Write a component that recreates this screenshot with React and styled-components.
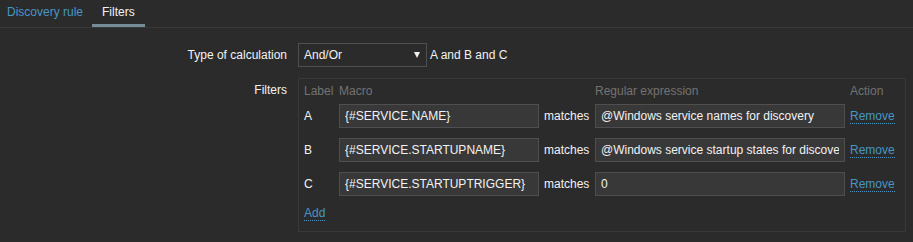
import React from "react";
import styled, { createGlobalStyle } from "styled-components";

const COLORS = {
  BG: "#2b2b2b",
  FIELD: "#383838",
  BORDER: "#4f4f4f",
  LINE: "#383838",
  TEXT: "#f2f2f2",
  MUTED: "#737373",
  LINK: "#4796c4",
  ACTIVE: "#768d99",
};

const GlobalStyle = createGlobalStyle`
  html, body {
    margin: 0;
    background: ${COLORS.BG};
    color: ${COLORS.TEXT};
    font-family: "Liberation Sans", Arial, sans-serif;
    font-size: 12px;
  }
  * { box-sizing: border-box; }
`;

const Page = styled.div`
  min-height: 242px;
  background: ${COLORS.BG};
`;

const TabList = styled.div`
  display: flex;
  height: 28px;
  border-bottom: 1px solid ${COLORS.LINE};
`;

const Tab = styled.div`
  padding: 0 10px;
  line-height: 24px;
  border-bottom: 3px solid ${({ active }) => (active ? COLORS.ACTIVE : "transparent")};
  color: ${({ active }) => (active ? COLORS.TEXT : COLORS.LINK)};
  &:first-child {
    padding-left: 7px;
    padding-right: 9px;
  }
`;

const Form = styled.div`
  display: grid;
  grid-template-columns: 287px auto;
  column-gap: 11px;
  row-gap: 11px;
  padding-top: 15px;
`;

const Label = styled.div`
  text-align: right;
  line-height: 24px;
`;

const Row = styled.div`
  display: flex;
  align-items: center;
  gap: 3px;
`;

const Select = styled.div`
  width: 129px;
  height: 24px;
  display: flex;
  align-items: center;
  justify-content: space-between;
  padding: 0 6px 0 5px;
  background: ${COLORS.BG};
  border: 1px solid ${COLORS.BORDER};
`;

const Arrow = styled.span`
  width: 0;
  height: 0;
  border-left: 3.5px solid transparent;
  border-right: 3.5px solid transparent;
  border-top: 6px solid ${COLORS.TEXT};
`;

const FilterBox = styled.div`
  width: 608px;
  border: 1px solid ${COLORS.LINE};
  padding: 5px 5px 11px 5px;
`;

const FilterTable = styled.div`
  display: grid;
  grid-template-columns: 30px 200px 46px 250px auto;
  column-gap: 5px;
  row-gap: 10px;
  align-items: center;
  justify-items: start;
`;

const Head = styled.div`
  color: ${COLORS.MUTED};
  line-height: 14px;
  margin-bottom: -4px;
  white-space: nowrap;
`;

const Cell = styled.span`
  white-space: nowrap;
`;

const Field = styled.input`
  width: ${({ width }) => width}px;
  height: 24px;
  padding: 0 5px;
  background: ${COLORS.FIELD};
  border: 1px solid ${COLORS.BORDER};
  color: ${COLORS.TEXT};
  font: inherit;
  outline: none;
`;

const Link = styled.a`
  color: ${COLORS.LINK};
  text-decoration: none;
  border-bottom: 1px dotted ${COLORS.LINK};
  line-height: 14px;
  cursor: pointer;
`;

const AddCell = styled.div`
  grid-column: 1 / -1;
  line-height: 14px;
`;

const filters = [
  { label: "A", macro: "{#SERVICE.NAME}", value: "@Windows service names for discovery" },
  { label: "B", macro: "{#SERVICE.STARTUPNAME}", value: "@Windows service startup states for discovery" },
  { label: "C", macro: "{#SERVICE.STARTUPTRIGGER}", value: "0" },
];

export default function App() {
  return (
    <Page>
      <GlobalStyle />
      <TabList>
        <Tab>Discovery rule</Tab>
        <Tab active>Filters</Tab>
      </TabList>
      <Form>
        <Label>Type of calculation</Label>
        <Row>
          <Select>
            <span>And/Or</span>
            <Arrow />
          </Select>
          <span>A and B and C</span>
        </Row>
        <Label>Filters</Label>
        <FilterBox>
          <FilterTable>
            <Head>Label</Head>
            <Head>Macro</Head>
            <Head />
            <Head>Regular expression</Head>
            <Head>Action</Head>
            {filters.map((f) => (
              <React.Fragment key={f.label}>
                <Cell>{f.label}</Cell>
                <Field width={200} value={f.macro} readOnly />
                <Cell>matches</Cell>
                <Field width={250} value={f.value} readOnly />
                <Link>Remove</Link>
              </React.Fragment>
            ))}
            <AddCell>
              <Link>Add</Link>
            </AddCell>
          </FilterTable>
        </FilterBox>
      </Form>
    </Page>
  );
}
